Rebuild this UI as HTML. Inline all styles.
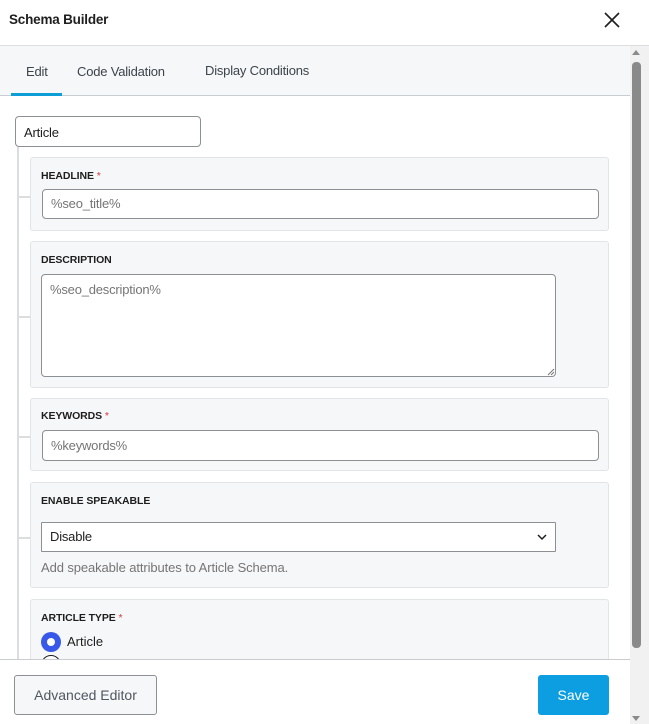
<!DOCTYPE html>
<html><head><meta charset="utf-8"><style>
*{box-sizing:border-box;margin:0;padding:0}
body{width:649px;height:724px;overflow:hidden;background:#fff;font-family:"Liberation Sans",sans-serif;color:#1e1e1e;position:relative}
.abs{position:absolute}
.hdr{left:0;top:0;width:649px;height:46px;border-bottom:1px solid #dcdde0;background:#fff}
.title{left:9px;top:12px;font-size:13.5px;font-weight:bold;color:#1e1e1e;letter-spacing:-0.2px}
.tabs{left:0;top:46px;width:630px;height:50px;background:#f6f7f9;border-bottom:1px solid #c9ccd1}
.tab{top:64px;font-size:13px;color:#3c434a;letter-spacing:-0.2px}
.ul{left:11px;top:93px;width:51px;height:3px;background:#0d9ed8}
.sb{left:630px;top:46px;width:19px;height:678px;background:#f1f1f1}
.thumb{left:632px;top:62px;width:9px;height:586px;background:#8a8a8a;border-radius:4px}
.art{left:15px;top:116px;width:186px;height:31px;border:1px solid #8c8f94;border-radius:4px;background:#fff;font-size:13px;padding:8px 8px;letter-spacing:-0.2px}
.tree{left:17px;top:147px;width:2px;height:512px;background:#dcdde0}
.conn{left:17px;width:13px;height:2px;background:#dcdde0}
.card{left:30px;width:579px;background:#f6f7f9;border:1px solid #e2e4e7;border-radius:3px}
.lbl{font-size:10.5px;font-weight:bold;color:#1e1e1e;text-transform:uppercase;letter-spacing:-0.1px}
.req{color:#d63638;font-weight:normal}
.inp{background:#fff;border:1px solid #8c8f94;border-radius:4px;font-size:13px;color:#757575;padding:0 8px;letter-spacing:-0.2px}
.foot{left:0;top:659px;width:630px;height:65px;background:#fff;border-top:1px solid #c9ccd1}
</style></head><body>
<div class="abs hdr"></div>
<div class="abs title">Schema Builder</div>
<svg class="abs" style="left:604px;top:12px" width="16" height="16" viewBox="0 0 16 16"><path d="M1 1L15 15M15 1L1 15" stroke="#1e1e1e" stroke-width="1.6"/></svg>
<div class="abs tabs"></div>
<div class="abs tab" style="left:26px">Edit</div>
<div class="abs tab" style="left:77px">Code Validation</div>
<div class="abs tab" style="left:205px;top:63px">Display Conditions</div>
<div class="abs ul"></div>
<div class="abs sb"></div>
<div class="abs" style="left:632px;top:50px;width:0;height:0;border-left:4px solid transparent;border-right:4px solid transparent;border-bottom:5px solid #8a8a8a"></div>
<div class="abs thumb"></div>
<div class="abs" style="left:632px;top:716px;width:0;height:0;border-left:4px solid transparent;border-right:4px solid transparent;border-top:5px solid #8a8a8a"></div>

<div class="abs art">Article</div>
<div class="abs tree"></div>
<div class="abs conn" style="top:196px"></div>
<div class="abs conn" style="top:316px"></div>
<div class="abs conn" style="top:436px"></div>
<div class="abs conn" style="top:537px"></div>

<div class="abs card" style="top:157px;height:74px"></div>
<div class="abs lbl" style="left:41px;top:170px">Headline <span class="req">*</span></div>
<div class="abs inp" style="left:42px;top:189px;width:557px;height:30px;line-height:28px">%seo_title%</div>

<div class="abs card" style="top:241px;height:147px"></div>
<div class="abs lbl" style="left:41px;top:254px">Description</div>
<div class="abs inp" style="left:41px;top:274px;width:515px;height:103px;padding-top:7px">%seo_description%</div>
<svg class="abs" style="left:547px;top:368px" width="8" height="8"><path d="M7 1L1 7M7 4L4 7" stroke="#777" stroke-width="1"/></svg>

<div class="abs card" style="top:398px;height:73px"></div>
<div class="abs lbl" style="left:41px;top:410px">Keywords <span class="req">*</span></div>
<div class="abs inp" style="left:42px;top:430px;width:557px;height:31px;line-height:29px">%keywords%</div>

<div class="abs card" style="top:482px;height:106px"></div>
<div class="abs lbl" style="left:41px;top:495px">Enable Speakable</div>
<div class="abs inp" style="left:41px;top:522px;width:515px;height:30px;line-height:28px;color:#1e1e1e;border-radius:1px">Disable</div>
<svg class="abs" style="left:537px;top:534px" width="10" height="7"><path d="M1 1L5 5L9 1" stroke="#1e1e1e" stroke-width="1.5" fill="none"/></svg>
<div class="abs" style="left:41px;top:560px;font-size:13px;color:#757575;letter-spacing:-0.1px">Add speakable attributes to Article Schema.</div>

<div class="abs card" style="top:599px;height:80px"></div>
<div class="abs lbl" style="left:41px;top:612px">Article Type <span class="req">*</span></div>
<div class="abs" style="left:41px;top:632px;width:20px;height:20px;border-radius:50%;background:#3858e9"></div>
<div class="abs" style="left:47px;top:638px;width:8px;height:8px;border-radius:50%;background:#fff"></div>
<div class="abs" style="left:67px;top:634px;font-size:13px">Article</div>
<div class="abs" style="left:41px;top:655px;width:20px;height:20px;border-radius:50%;border:1.5px solid #1e1e1e;background:#fff"></div>

<div class="abs foot"></div>
<div class="abs" style="left:14px;top:675px;width:143px;height:40px;border:1px solid #8c8f94;border-radius:3px;background:#f6f7f9;font-size:14px;color:#50575e;text-align:center;line-height:38px">Advanced Editor</div>
<div class="abs" style="left:538px;top:675px;width:71px;height:40px;border-radius:3px;background:#0d9ee1;font-size:14px;color:#fff;text-align:center;line-height:40px">Save</div>
</body></html>
